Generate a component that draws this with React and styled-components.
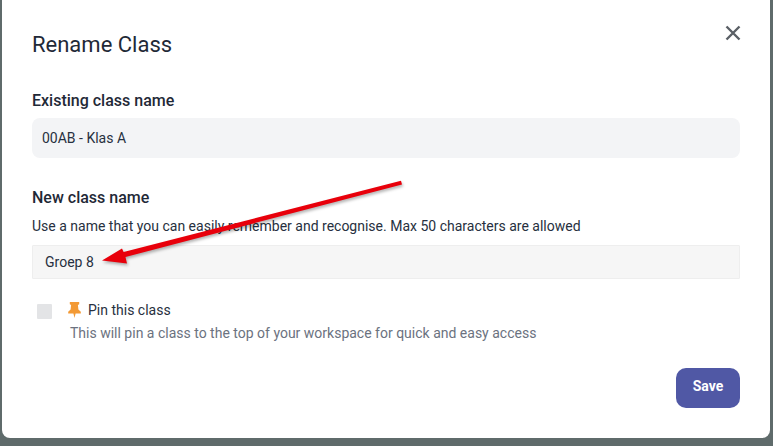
import React from "react";
import styled, {createGlobalStyle} from "styled-components";

const GlobalStyle = createGlobalStyle`
    html, body {
        margin: 0;
        height: 100%;
        background: #5f6b6b;
        overflow: hidden;
    }
`;

const Page = styled.div`
    width: 773px;
    height: 446px;
    padding: 0 3px 8px 2px;
    box-sizing: border-box;
    font-family: Roboto, "Liberation Sans", sans-serif;
`;

const Modal = styled.div`
    position: relative;
    height: 100%;
    box-sizing: border-box;
    padding: 32px 30px 0 30px;
    background: #fff;
    border-radius: 0 0 8px 8px;
    display: flex;
    flex-direction: column;
`;

const Title = styled.h2`
    margin: 0 0 33px;
    font-size: 22px;
    line-height: 26px;
    font-weight: 400;
    color: #1f2937;
`;

const CloseButton = styled.button`
    position: absolute;
    top: 24px;
    right: 28px;
    width: 18px;
    height: 18px;
    padding: 0;
    border: 0;
    background: none;
    color: #5b6066;
    display: flex;
`;

const Label = styled.label`
    font-size: 16px;
    line-height: 20px;
    font-weight: 500;
    color: #1f2937;
`;

const Hint = styled.p`
    margin: 9px 0 0;
    font-size: 14px;
    line-height: 18px;
    color: #273040;
`;

const Field = styled.div`
    display: flex;
    align-items: center;
    box-sizing: border-box;
    margin-top: ${p => p.$top}px;
    height: ${p => p.$height}px;
    padding-left: ${p => p.$inset}px;
    font-size: 14px;
    color: #273040;
    background: ${p => p.$bg};
    border: ${p => p.$border};
    border-radius: ${p => p.$radius}px;
`;

const Section = styled.div`
    display: flex;
    flex-direction: column;
    margin-bottom: ${p => p.$bottom}px;
`;

const PinRow = styled.div`
    display: flex;
    align-items: flex-start;
    padding-left: 5px;
`;

const Check = styled.span`
    flex: none;
    width: 15px;
    height: 15px;
    margin: 3px 18px 0 0;
    background: #e3e4e6;
    border-radius: 1px;
`;

const PinText = styled.div`
    display: flex;
    flex-direction: column;
`;

const PinTitle = styled.div`
    display: flex;
    align-items: center;
    gap: 7px;
    height: 18px;
    margin-left: -2px;
    font-size: 14px;
    color: #273040;
`;

const PinNote = styled.div`
    margin-top: 5px;
    font-size: 14px;
    line-height: 18px;
    color: #6b7280;
`;

const Footer = styled.div`
    display: flex;
    justify-content: flex-end;
    margin-top: 26px;
`;

const SaveButton = styled.button`
    width: 64px;
    height: 40px;
    padding: 0 0 4px;
    border: 0;
    border-radius: 10px;
    background: #5058a5;
    color: #fff;
    font-family: inherit;
    font-size: 14px;
    font-weight: 700;
`;

const Arrow = styled.svg`
    position: absolute;
    left: -2px;
    top: 0;
    pointer-events: none;
    filter: drop-shadow(1px 2px 1.5px rgba(0, 0, 0, 0.3));
`;

const App = () => {
    return (
        <Page>
            <GlobalStyle/>
            <Modal>
                <Title>Rename Class</Title>
                <CloseButton aria-label="Close">
                    <svg width="18" height="18" viewBox="0 0 18 18" fill="none" stroke="currentColor" strokeWidth="2.4">
                        <path d="M2.5 2.5l13 13M15.5 2.5l-13 13"/>
                    </svg>
                </CloseButton>

                <Section $bottom={30}>
                    <Label>Existing class name</Label>
                    <Field $top={7} $height={40} $inset={10} $radius={8} $bg="#f3f4f6" $border="0">00AB - Klas A</Field>
                </Section>

                <Section $bottom={22}>
                    <Label>New class name</Label>
                    <Hint>Use a name that you can easily remember and recognise. Max 50 characters are allowed</Hint>
                    <Field $top={10} $height={34} $inset={12} $radius={1} $bg="#f6f6f6" $border="1px solid #eeeeee">Groep 8</Field>
                </Section>

                <PinRow>
                    <Check/>
                    <PinText>
                        <PinTitle>
                            <svg width="13" height="16" viewBox="0 0 13 16" fill="#f39a35">
                                <path d="M1.8 0h9.4v2.2L9.9 3 10.4 7.4 12.8 9.8v1.8H7.6L6.5 16 5.4 11.6H.2V9.8l2.4-2.4L3.1 3 1.8 2.2z"/>
                            </svg>
                            Pin this class
                        </PinTitle>
                        <PinNote>This will pin a class to the top of your workspace for quick and easy access</PinNote>
                    </PinText>
                </PinRow>

                <Footer>
                    <SaveButton>Save</SaveButton>
                </Footer>

                <Arrow width="773" height="446" viewBox="0 0 773 446">
                    <path d="M401 180.8L402 184.4 125.5 257 127 263.5 102 260.5 122 248.5 123.6 252z" fill="#e8000b"/>
                </Arrow>
            </Modal>
        </Page>
    );
};

export default App;
